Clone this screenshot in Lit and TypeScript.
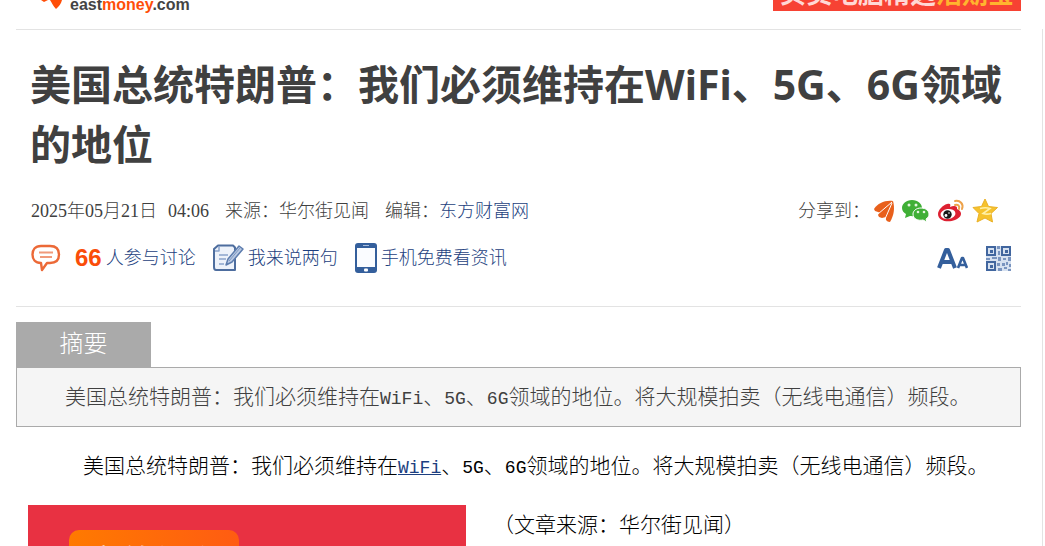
import { LitElement, html, css, svg } from "lit";
import { customElement } from "lit/decorators.js";

const shareFlame = svg`<svg width="22" height="24" viewBox="0 0 22 24" fill="#e8601c"><path d="M1 10C5 4 12 1 20 2L8 14 5 13 2 12Z"/><path d="M5 16C7 10 13 5 20 2c-2 6-4 11-7 16l-4 1-3-1Z"/><path d="M13 21c-1-6 2-13 7-19 2 7 1 14-3 21-2 0-3-1-4-2Z"/><path d="M5 15 19 3M12 20 19 4" stroke="#fff" stroke-width="1"/></svg>`;
const shareWechat = svg`<svg width="28" height="24" viewBox="0 0 28 24"><path d="M10 1C4 1 0 5 0 9c0 3 2 5 4 6l-1 4 5-2c8 1 12-3 12-8 0-4-4-8-10-8Z" fill="#3faf36"/><path d="M19 9c-5 0-8 3-8 6 0 5 5 7 10 6l4 2-1-3c2-1 3-3 3-5 0-3-3-6-8-6Z" fill="#3faf36" stroke="#fff"/><g fill="#e5f5df"><circle cx="7" cy="6" r="1.5"/><circle cx="14" cy="6" r="1.5"/><circle cx="16" cy="13" r="1.3"/><circle cx="22" cy="13" r="1.3"/></g></svg>`;
const shareWeibo = svg`<svg width="28" height="24" viewBox="0 0 28 24"><path d="M10 5c3-1 4 0 3 3 4-2 8-1 7 2 7 3 4 9-2 11-7 3-17 1-17-6C1 11 6 6 10 5Z" fill="#dd2031"/><ellipse cx="11" cy="15" rx="7.500" ry="5" fill="#fff" transform="rotate(-8 11 15)"/><circle cx="10.500" cy="15.500" r="4.200" fill="#171717"/><circle cx="9" cy="16.500" r="1.400" fill="#fff"/><circle cx="12" cy="14" r=".8" fill="#fff"/><path d="M18 2c5-1 9 3 7 8M18 6c3-1 5 1 4 4" fill="none" stroke="#eda24a" stroke-width="2" stroke-linecap="round"/></svg>`;
const shareStar = svg`<svg width="26" height="26" viewBox="0 0 26 26"><path d="m13 1 3.500 7.500 9 1-6.500 6 1.500 8.500-7.500-4-8 4 2-8.500L1 9.500l8.500-1Z" fill="#f6c22d" stroke="#eab127" stroke-linejoin="round"/><path d="M8 10.500c4-1 7-1 10 0l-7 5c3 1 5 1 8 0" fill="none" stroke="#fff0a8" stroke-width="1.600"/></svg>`;
const bubble = svg`<svg width="30" height="28" viewBox="0 0 30 28" fill="none" stroke="#ec6937" stroke-width="2.400" stroke-linejoin="round"><path d="M10 2h9c6 0 9 3 9 8.500S25 19 19 19h-3l-5 7-1-7C4 19 1.500 15 1.500 10.500S4 2 10 2Z"/><path d="M8 8.500h14M9 13h12" stroke-width="1.800" stroke="#f09a7b"/></svg>`;
const notepad = svg`<svg width="31" height="28" viewBox="0 0 31 28" fill="none" stroke-linejoin="round"><path d="M5 1.500h15l2 2V26H3c-2 0-2-2-2-3V5Z" fill="#edf2fa" stroke="#4d6d9e" stroke-width="2"/><path d="M2 7h4V2M6 11h9M6 15h7M6 20h5" stroke="#8ba4cb" stroke-width="1.500"/><path d="m13 21 2-6L26 2l4 3-11 13Z" fill="#b9c9e3" stroke="#5d7dae" stroke-width="1.500"/><path d="m16 17 11-13" stroke="#7d98c2"/></svg>`;
const phone = svg`<svg width="22" height="30" viewBox="0 0 22 30"><rect width="22" height="30" rx="3" fill="#345f9c"/><path d="M2 5h18v19H2z" fill="#fafcff"/><path d="M8 2.500h6" stroke="#a9bddb"/><rect x="9" y="25.500" width="4" height="3" rx="1" fill="#fff"/></svg>`;
const letters = svg`<svg width="31" height="22" viewBox="0 0 31 22" fill="none" stroke="#345f9c" stroke-linejoin="round"><path d="M2 21 9 3h2l7 18M5 15h11" stroke-width="4"/><path d="m21 21 4-10h1l4 10M22 18h7" stroke-width="2.600"/></svg>`;
const qr = svg`<svg width="25" height="25" viewBox="0 0 25 25"><path d="M0 0h25v25H0z" fill="#d6e1f0"/><g fill="none" stroke="#41669f" stroke-width="2"><path d="M1 1h8v8H1zM16 1h8v8h-8zM1 16h8v8H1z"/></g><path fill="#41669f" d="M4 4h3v3H4zM19 4h3v3h-3zM4 19h3v3H4z"/><path fill="#7994bf" d="M11 0h3v3h-3zM12 5h2v4h-2zM0 12h4v2H0zM6 11h5v2H6zM12 11h3v4h-3zM17 12h3v2h-3zM22 11h3v4h-3zM11 17h3v3h-3zM12 22h4v3h-4zM16 17h3v3h-3zM20 16h2v3h-2zM18 21h3v2h-3zM23 18h2v3h-2zM22 23h3v2h-3z"/></svg>`;
const logoMark = svg`<svg width="24" height="10" viewBox="0 0 24 10" fill="#ff4e08"><path d="M1 0h7L4 2ZM10 0h12c-1 4-3 6-6 9-3-3-4-6-6-9Z"/></svg>`;

@customElement("app-root")
export class AppRoot extends LitElement {
  static styles = css`
    :host { display: block; height: 100vh; overflow: hidden; background: #fff; color: #404040; font: 300 18px/26px "Liberation Serif", "Noto Sans CJK SC", serif; }
    * { box-sizing: border-box; }
    svg { display: block; flex: none; }
    a { color: #1d3f80; text-decoration: none; }
    .header { display: flex; justify-content: space-between; align-items: flex-start; height: 29px; padding: 0 24px 0 40px; }
    .logo { display: flex; gap: 6px; color: #444; font: bold 16px/20px "Liberation Sans", sans-serif; height: 16px; align-items: flex-start; }
    .logo-name { margin-top: -5px; }
    .logo-accent { color: #ff4e08; }
    .ad { display: flex; align-items: flex-end; justify-content: center; width: 248px; height: 11px; background: #f74233; color: #ffd8d5; font: bold 26px/32px "Noto Sans CJK SC", sans-serif; overflow: hidden; }
    .ad-text { margin-bottom: 3px; }
    .ad-accent { color: #ffb52e; }
    .page { display: flex; gap: 21px; padding-left: 16px; }
    .article { flex: 1; min-width: 0; border-top: 1px solid #e3e3e3; }
    .side { width: 3px; border-left: 1px solid #e3e3e3; }
    .title { margin: 0; padding: 24px 14px 0; color: #404040; font: bold 41px/60px "Noto Sans", "Noto Sans CJK SC", sans-serif; }
    .meta { display: flex; align-items: center; gap: 16px; padding: 22px 23px 0 15px; height: 52px; }
    .date { display: flex; gap: 11px; }
    .share { display: flex; align-items: center; gap: 3px; margin-left: auto; }
    .share-icons { display: flex; align-items: center; gap: 7px; }
    .actions { display: flex; align-items: center; padding: 14px 10px 0 15px; height: 50px; }
    .action { display: flex; align-items: center; margin-right: 17px; gap: 4px; }
    .count { margin-left: 10px; color: #fa4d09; font: bold 24px/26px "Liberation Sans", sans-serif; }
    .tools { display: flex; align-items: center; gap: 18px; margin-left: auto; }
    .tool { border: 0; padding: 0; background: none; }
    .summary { margin-top: 30px; border-top: 1px solid #e3e3e3; padding-top: 15px; font-size: 21px; line-height: 30px; }
    .tab { margin: 0; width: 135px; height: 45px; background: #aaa; color: #fff; text-align: center; font-size: 24px; line-height: 45px; font-weight: 300; }
    .box { margin: 0; border: 1px solid #aaa; background: #f5f5f5; padding: 14px 48px; color: #404040; }
    .mono { font-family: "Liberation Mono", monospace; font-size: 18px; line-height: 18px; }
    .body { font-size: 21px; line-height: 30px; color: #000; }
    .para { margin: 24px 0; padding-left: 67px; }
    .keyword { text-decoration: underline; }
    .tail { display: flex; gap: 27px; padding-left: 12px; }
    .promo { width: 438px; height: 240px; background: #e83142; padding: 25px 41px; }
    .coupon { width: 170px; height: 60px; border-radius: 10px; background: linear-gradient(100deg, #ff7a00, #ff5a13); color: #fff; text-align: center; font: bold 34px/50px "Noto Sans CJK SC", sans-serif; padding-top: 6px; }
    .source { margin: 5px 0; }
  `;

  render() {
    return html`
      <header class="header">
        <a class="logo" href="#">${logoMark}<span class="logo-name">east<span class="logo-accent">money</span>.com</span></a>
        <a class="ad" href="#"><span class="ad-text">买卖电脑精选<span class="ad-accent">活期宝</span></span></a>
      </header>
      <div class="page">
        <main class="article">
          <h1 class="title">美国总统特朗普：我们必须维持在WiFi、5G、6G领域的地位</h1>
          <div class="meta">
            <span class="date"><span>2025年05月21日</span><span>04:06</span></span>
            <span>来源：华尔街见闻</span>
            <span>编辑：<a href="#">东方财富网</a></span>
            <div class="share"><span>分享到：</span>
              <div class="share-icons">
                <a href="#" aria-label="东方财富">${shareFlame}</a>
                <a href="#" aria-label="微信">${shareWechat}</a>
                <a href="#" aria-label="微博">${shareWeibo}</a>
                <a href="#" aria-label="QQ空间">${shareStar}</a>
              </div>
            </div>
          </div>
          <div class="actions">
            <a class="action" href="#">${bubble}<span class="count">66</span><span>人参与讨论</span></a>
            <a class="action" href="#">${notepad}<span>我来说两句</span></a>
            <a class="action" href="#">${phone}<span>手机免费看资讯</span></a>
            <div class="tools">
              <button class="tool" aria-label="字体大小">${letters}</button>
              <button class="tool" aria-label="二维码">${qr}</button>
            </div>
          </div>
          <section class="summary">
            <h2 class="tab">摘要</h2>
            <p class="box">美国总统特朗普：我们必须维持在<span class="mono">WiFi</span>、<span class="mono">5G</span>、<span class="mono">6G</span>领域的地位。将大规模拍卖（无线电通信）频段。</p>
          </section>
          <section class="body">
            <p class="para">美国总统特朗普：我们必须维持在<a class="keyword mono" href="#">WiFi</a>、<span class="mono">5G</span>、<span class="mono">6G</span>领域的地位。将大规模拍卖（无线电通信）频段。</p>
            <div class="tail">
              <div class="promo"><div class="coupon">高效便利</div></div>
              <p class="source">（文章来源：华尔街见闻）</p>
            </div>
          </section>
        </main>
        <aside class="side"></aside>
      </div>
    `;
  }
}
